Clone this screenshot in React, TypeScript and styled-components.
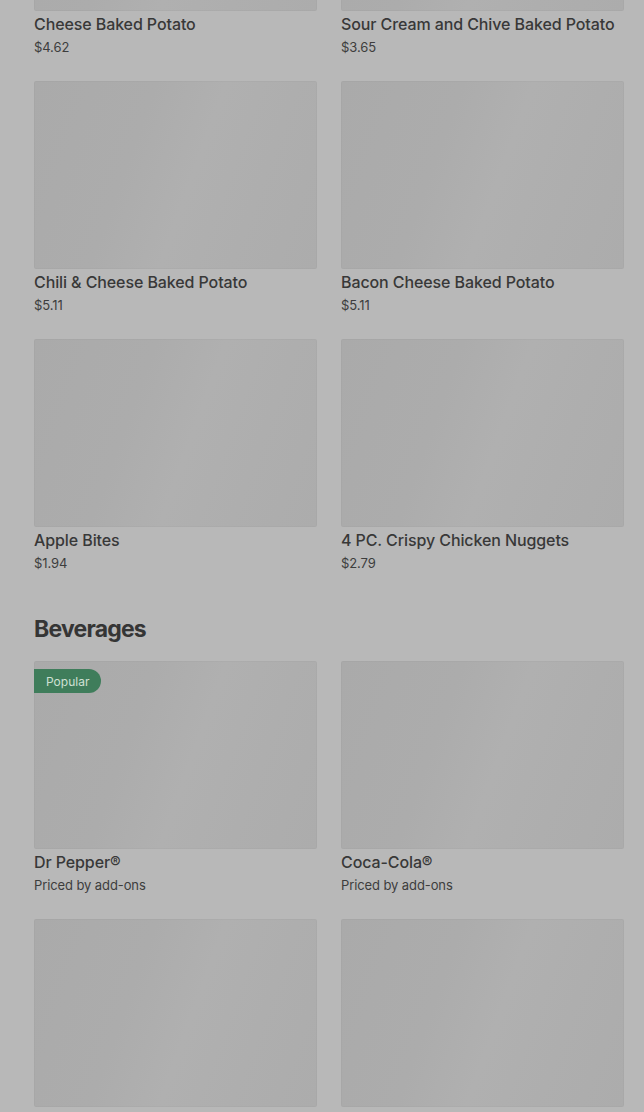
import styled, {createGlobalStyle} from 'styled-components'

const GlobalStyle = createGlobalStyle`
  html, body {
    margin: 0;
    padding: 0;
    background: #b8b8b8;
    font-family: Inter, "Noto Sans", Arial, sans-serif;
    color: #3a3a3a;
    overflow: hidden;
  }
`

const Page = styled.main`
  height: 1112px;
  overflow: hidden;
  padding: 0 20px 0 34px;
`

// the list is scrolled part way down, the first row's photos sit above the fold
const Scroller = styled.div`
  margin-top: -177px;
`

const Section = styled.section`
  & + & {
    margin-top: 40px;
  }
`

const Heading = styled.h2`
  margin: 0 0 16px;
  font-size: 23px;
  line-height: 32px;
  font-weight: 700;
  letter-spacing: -0.8px;
  color: #353535;
`

const Grid = styled.div`
  display: grid;
  grid-template-columns: 283px 283px;
  column-gap: 24px;
  row-gap: 24px;
`

const Card = styled.article`
  display: flex;
  flex-direction: column;
`

const Thumb = styled.div`
  position: relative;
  height: 188px;
  border-radius: 2px;
  box-shadow: inset 0 0 0 1px rgba(0, 0, 0, 0.02);
  background: linear-gradient(
    110deg,
    #aaaaaa 0%,
    #acacac 35%,
    #b0b0b0 55%,
    #aeaeae 75%,
    #acacac 100%
  );
`

const Badge = styled.span`
  position: absolute;
  top: 8px;
  left: 0;
  height: 24px;
  padding: 0 12px;
  display: flex;
  align-items: center;
  border-radius: 0 12px 12px 0;
  background: #3f7d5b;
  color: #cfe0d4;
  font-size: 12px;
`

const Name = styled.h3`
  margin: 1px 0 0;
  font-size: 16px;
  line-height: 24px;
  font-weight: 500;
  letter-spacing: -0.1px;
  color: #383838;
`

const Price = styled.p`
  margin: 1px 0 0;
  font-size: 13px;
  line-height: 20px;
  color: #3d3d3d;
  letter-spacing: -0.1px;
`

type Item = {id: string; name?: string; price?: string; popular?: boolean}

const sides: Item[] = [
  {id: 'cheese', name: 'Cheese Baked Potato', price: '$4.62'},
  {id: 'sour', name: 'Sour Cream and Chive Baked Potato', price: '$3.65'},
  {id: 'chili', name: 'Chili & Cheese Baked Potato', price: '$5.11'},
  {id: 'bacon', name: 'Bacon Cheese Baked Potato', price: '$5.11'},
  {id: 'apple', name: 'Apple Bites', price: '$1.94'},
  {id: 'nuggets', name: '4 PC. Crispy Chicken Nuggets', price: '$2.79'},
]

// last row's details are below the fold, only their photos show
const beverages: Item[] = [
  {id: 'drpepper', name: 'Dr Pepper®', price: 'Priced by add-ons', popular: true},
  {id: 'coke', name: 'Coca-Cola®', price: 'Priced by add-ons'},
  {id: 'bev3'},
  {id: 'bev4'},
]

const ItemCard = ({item}: {item: Item}) => (
  <Card>
    <Thumb>{item.popular && <Badge>Popular</Badge>}</Thumb>
    {item.name && <Name>{item.name}</Name>}
    {item.price && <Price>{item.price}</Price>}
  </Card>
)

export default function App() {
  return (
    <>
      <GlobalStyle />
      <Page>
        <Scroller>
          <Section>
            <Grid>
              {sides.map((item) => (
                <ItemCard key={item.id} item={item} />
              ))}
            </Grid>
          </Section>
          <Section>
            <Heading>Beverages</Heading>
            <Grid>
              {beverages.map((item) => (
                <ItemCard key={item.id} item={item} />
              ))}
            </Grid>
          </Section>
        </Scroller>
      </Page>
    </>
  )
}
